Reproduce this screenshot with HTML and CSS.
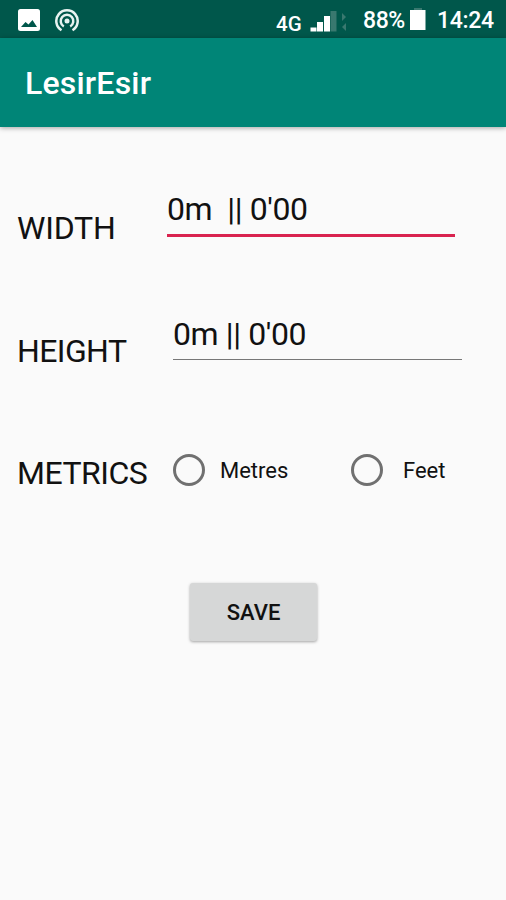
FILE: index.html
```html
<!DOCTYPE html>
<html lang="en">

<head>
    <meta charset="UTF-8">
    <meta name="viewport" content="width=device-width, initial-scale=1.0">
    <title>LesirEsir</title>
    <link rel="stylesheet" href="styles.css">
</head>
<body>
    <div class="status">
        <svg class="picture" width="22" height="22" viewBox="0 0 22 22">
            <rect width="22" height="22" rx="2.5" fill="#fff"/>
            <path d="M3 18l4.500-5 3 2.500L14.500 11 19 18z" fill="#00574b"/>
        </svg>
        <svg class="hotspot" width="24" height="23" viewBox="0 0 24 23" fill="none" stroke="#e8f3f1" stroke-width="2.500">
            <path d="M6.500 21.200A10.700 10.700 0 1 1 17.500 21.200"/>
            <path d="M8.800 17.500A6.300 6.300 0 1 1 15.200 17.500"/>
            <circle cx="12" cy="12" r="2.500" fill="#e8f3f1" stroke="none"/>
        </svg>
        <span class="network">4G</span>
        <svg class="signal" width="38" height="22" viewBox="0 0 38 22">
            <path d="M0.500 16.500h6v4h-6zM7 11h6v9.500H7zM14 5h6v15.500h-6z" fill="#fff"/>
            <path d="M20.500 0h6v20.500h-6z" fill="#39786f"/>
            <path d="M32 2l4 4-4 4zM36 12l-4 4 4 4z" fill="#39786f"/>
        </svg>
        <span class="percent">88%</span>
        <svg class="battery" width="16" height="22" viewBox="0 0 16 22">
            <path d="M4 0h8v2H4z" fill="#39786f"/>
            <path d="M0 2h15.500v20H0z" fill="#fff"/>
        </svg>
        <span class="clock">14:24</span>
    </div>
    <header>
        <h1>LesirEsir</h1>
    </header>
    <form>
        <div class="row width-row">
            <label for="width">WIDTH</label>
            <input type="text" id="width" value="0m  || 0'00">
        </div>
        <div class="row height-row">
            <label for="height">HEIGHT</label>
            <input type="text" id="height" value="0m || 0'00">
        </div>
        <div class="row metrics-row">
            <span class="metrics">METRICS</span>
            <input type="radio" id="metres" name="metrics">
            <label class="option metres" for="metres">Metres</label>
            <input type="radio" id="feet" name="metrics">
            <label class="option feet" for="feet">Feet</label>
        </div>
        <button type="button">SAVE</button>
    </form>
</body>
</html>
```

FILE: styles.css
```css
* {
    box-sizing: border-box;
}

body {
    margin: 0;
    height: 900px;
    overflow: hidden;
    font-family: Roboto, sans-serif;
    background-color: #fafafa;
    color: #111;
}

.status {
    display: flex;
    align-items: flex-start;
    height: 38px;
    padding-left: 18px;
    background-color: #00574b;
    color: #fff;
    font-weight: 500;
    white-space: nowrap;
}

svg {
    flex: none;
}

.picture {
    margin-top: 9px;
}

.hotspot {
    margin: 9px 0 0 15px;
}

.network {
    width: 34px;
    margin: 11px 0 0 197px;
    font-size: 20.5px;
    line-height: 26px;
}

.signal {
    margin-top: 11px;
}

.percent {
    width: 47px;
    margin: 8px 0 0 15px;
    font-size: 23px;
    line-height: 26px;
    letter-spacing: -0.4px;
}

.battery {
    margin-top: 8px;
}

.clock {
    margin: 8px 0 0 11px;
    font-size: 23px;
    line-height: 26px;
    letter-spacing: -0.3px;
}

header {
    height: 89px;
    padding: 26px 25px 0;
    background-color: #008577;
    box-shadow: 0 1px 5px rgba(0, 0, 0, 0.35);
}

h1 {
    margin: 0;
    color: #fff;
    font-size: 32px;
    font-weight: 500;
    line-height: 38px;
    letter-spacing: 0.2px;
}

form {
    padding: 63px 0 0 17px;
}

.row {
    display: flex;
    align-items: flex-start;
    font-size: 32px;
    line-height: 38px;
    letter-spacing: -0.4px;
}

.width-row {
    height: 125px;
}

.width-row label {
    width: 150px;
    margin-top: 19px;
    letter-spacing: -0.2px;
}

.height-row {
    height: 139px;
}

.height-row label {
    width: 156px;
    margin-top: 17px;
    letter-spacing: -0.6px;
}

input[type="text"] {
    height: 47px;
    padding: 0 0 6px;
    border: none;
    border-bottom: 3px solid #d9234f;
    outline: none;
    background: none;
    color: #111;
    font-family: inherit;
    font-size: 32px;
    line-height: 38px;
    letter-spacing: -0.4px;
}

#width {
    width: 288px;
}

#height {
    width: 289px;
    height: 45px;
    border-bottom: 1px solid #777;
}

.metrics {
    width: 156px;
    letter-spacing: -0.5px;
}

input[type="radio"] {
    flex: none;
    appearance: none;
    width: 32px;
    height: 32px;
    margin: 0;
    border: 3px solid #707070;
    border-radius: 50%;
}

.option {
    margin-top: 1px;
    font-size: 22px;
    line-height: 32px;
    letter-spacing: normal;
}

.metres {
    width: 146px;
    padding-left: 15px;
}

.feet {
    padding-left: 20px;
}

button {
    display: block;
    width: 127px;
    height: 58px;
    margin: 91px 0 0 173px;
    padding: 0;
    border: none;
    border-radius: 3px;
    background-color: #d6d7d7;
    box-shadow: 0 1px 3px rgba(0, 0, 0, 0.35);
    color: #111;
    font-family: inherit;
    font-size: 22px;
    font-weight: 500;
}
```
